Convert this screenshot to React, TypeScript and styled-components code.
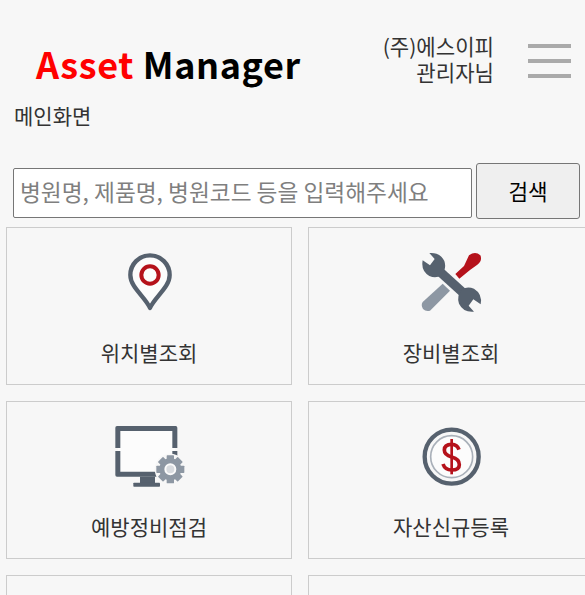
import React from "react";
import styled, { createGlobalStyle } from "styled-components";

const Global = createGlobalStyle`
  html, body { margin: 0; padding: 0; background: #f7f7f7; overflow: hidden; height: 595px; width: 585px; }
  body { font-family: "Noto Sans CJK KR", "Noto Sans", sans-serif; color: #333; }
  * { box-sizing: border-box; }
`;

const Page = styled.div`
  width: 585px;
  height: 595px;
  overflow: hidden;
`;

const Header = styled.header`
  display: flex;
  align-items: flex-start;
  height: 99px;
  padding: 33px 0 0 36px;
`;

const Logo = styled.div`
  flex: 1;
  font-size: 36px;
  line-height: 60px;
  font-weight: 700;
  white-space: nowrap;
  color: #000;
  letter-spacing: 0.6px;
`;

const LogoAccent = styled.span`
  color: #f00;
`;

const Account = styled.div`
  text-align: right;
  font-size: 21.1px;
  line-height: 26px;
  color: #333;
  margin: 0 34px 0 0;
`;

const Burger = styled.button`
  display: flex;
  flex-direction: column;
  justify-content: space-between;
  width: 43px;
  height: 34px;
  padding: 0;
  margin: 11px 14px 0 0;
  border: none;
  background: none;
`;

const BurgerLine = styled.span`
  display: block;
  height: 4px;
  background: #aaa;
`;

const Crumb = styled.div`
  padding-left: 14px;
  font-size: 21px;
  line-height: 32px;
  color: #333;
`;

const SearchRow = styled.form`
  display: flex;
  align-items: flex-end;
  gap: 4px;
  margin: 32px 0 0 13px;
`;

const SearchInput = styled.input`
  width: 459px;
  height: 50px;
  margin-bottom: 1px;
  padding: 0 6px 4px;
  font: 400 22.7px "Noto Sans CJK KR", sans-serif;
  background: #fff;
  border: 1px solid #767676;
  border-radius: 2px;
  color: #000;
  outline: none;
  &::placeholder { color: #7f7f7f; opacity: 1; }
`;

const SearchButton = styled.button`
  width: 104px;
  height: 56px;
  padding: 0 0 2px;
  font: 400 21.3px "Noto Sans CJK KR", sans-serif;
  color: #000;
  background: #efefef;
  border: 1px solid #767676;
  border-radius: 3px;
`;

const Grid = styled.div`
  display: grid;
  grid-template-columns: 286px 286px;
  grid-auto-rows: 158px;
  column-gap: 16px;
  row-gap: 16px;
  margin: 8px 0 0 6px;
`;

const Card = styled.a`
  display: flex;
  flex-direction: column;
  align-items: center;
  border: 1px solid #ccc;
  background: #f7f7f7;
  color: #333;
`;

const IconSlot = styled.div`
  height: 100px;
  width: 100%;
  display: flex;
  justify-content: center;
  padding-top: 12px;
`;

const CardLabel = styled.div`
  font-size: 21px;
  line-height: 30px;
  margin-top: 9px;
  color: #333;
`;

const SLATE = "#56616e";
const STEEL = "#8d97a3";
const RED = "#b5121b";

const PinIcon = () => (
  <svg width="100" height="80" viewBox="-3 0 300 240" fill="none">
    <path d="M150 204 C135 170 91 142 91 105 A59 59 0 0 1 209 105 C209 142 165 170 150 204 Z" fill="#fcfcfc" stroke={SLATE} strokeWidth="13" strokeLinejoin="round" />
    <circle cx="150" cy="105" r="26" fill="#fcfcfc" stroke={RED} strokeWidth="12" />
  </svg>
);

const WRENCH_HEAD = "M88 39 L104 57 L90 76 L68 61 Q62 92 88 108 Q108 116 124 106 Q141 86 133 63 Q120 36 88 39 Z";

const ToolsIcon = () => (
  <svg width="100" height="80" viewBox="3 0 300 240">
    <path d="M68 186 L128 131 L150 152 L90 212 Q78 216 69 207 Q62 195 68 186 Z" fill={STEEL} />
    <path d="M166 102 L192 78 L207 46 Q226 32 241 46 Q248 62 232 74 L210 90 L178 116 Z" fill={RED} />
    <path d="M112 88 L198 166" stroke={SLATE} strokeWidth="28" />
    <path d={WRENCH_HEAD} fill={SLATE} />
    <path d={WRENCH_HEAD} fill={SLATE} transform="rotate(180 155 127)" />
  </svg>
);

const GEAR_TEETH = [0, 45, 90, 135, 180, 225, 270, 315];

const MonitorIcon = () => (
  <svg width="100" height="80" viewBox="-3 -3 300 240">
    <rect x="54" y="41" width="170" height="136" fill="#fcfcfc" />
    <path d="M46 99 V38 Q46 33 51 33 H227 Q232 33 232 38 V99 H217 V48 H61 V99 Z" fill={SLATE} />
    <path d="M46 108 H61 V170 H170 V185 H51 Q46 185 46 180 Z" fill={SLATE} />
    <rect x="217" y="108" width="15" height="30" fill={SLATE} />
    <rect x="120" y="185" width="45" height="19" fill={SLATE} />
    <rect x="100" y="203" width="80" height="12" rx="2" fill={SLATE} />
    <circle cx="211" cy="163" r="47" fill="#f7f7f7" />
    <g fill={STEEL}>
      <circle cx="211" cy="163" r="33" />
      {GEAR_TEETH.map((a) => (
        <rect key={a} x="200" y="121" width="22" height="16" rx="2" transform={`rotate(${a} 211 163)`} />
      ))}
    </g>
    <circle cx="211" cy="163" r="15" fill="#d9dce0" stroke="#fbfbfb" strokeWidth="6" />
  </svg>
);

const DollarIcon = () => (
  <svg width="100" height="80" viewBox="3 -3 300 240" fill="none">
    <circle cx="155" cy="125" r="81" fill="#f7f7f7" stroke={SLATE} strokeWidth="13" />
    <circle cx="155" cy="125" r="63" fill="#fcfcfc" stroke="#a9b0b9" strokeWidth="5" />
    <path d="M177 104 Q172 88 155 88 Q133 88 133 105 Q133 120 155 126 Q178 132 178 149 Q178 165 155 165 Q135 165 129 147" stroke={RED} strokeWidth="11" />
    <path d="M155 72 V178" stroke={RED} strokeWidth="8" />
  </svg>
);

const items = [
  { label: "위치별조회", icon: <PinIcon /> },
  { label: "장비별조회", icon: <ToolsIcon /> },
  { label: "예방정비점검", icon: <MonitorIcon /> },
  { label: "자산신규등록", icon: <DollarIcon /> },
  { label: "", icon: null },
  { label: "", icon: null },
];

export default function App() {
  return (
    <Page>
      <Global />
      <Header>
        <Logo><LogoAccent>Asset</LogoAccent> Manager</Logo>
        <Account>(주)에스이피<br />관리자님</Account>
        <Burger aria-label="메뉴"><BurgerLine /><BurgerLine /><BurgerLine /></Burger>
      </Header>
      <Crumb>메인화면</Crumb>
      <SearchRow>
        <SearchInput placeholder="병원명, 제품명, 병원코드 등을 입력해주세요" />
        <SearchButton type="button">검색</SearchButton>
      </SearchRow>
      <Grid>
        {items.map((it, i) => (
          <Card key={i}>
            <IconSlot>{it.icon}</IconSlot>
            <CardLabel>{it.label}</CardLabel>
          </Card>
        ))}
      </Grid>
    </Page>
  );
}
